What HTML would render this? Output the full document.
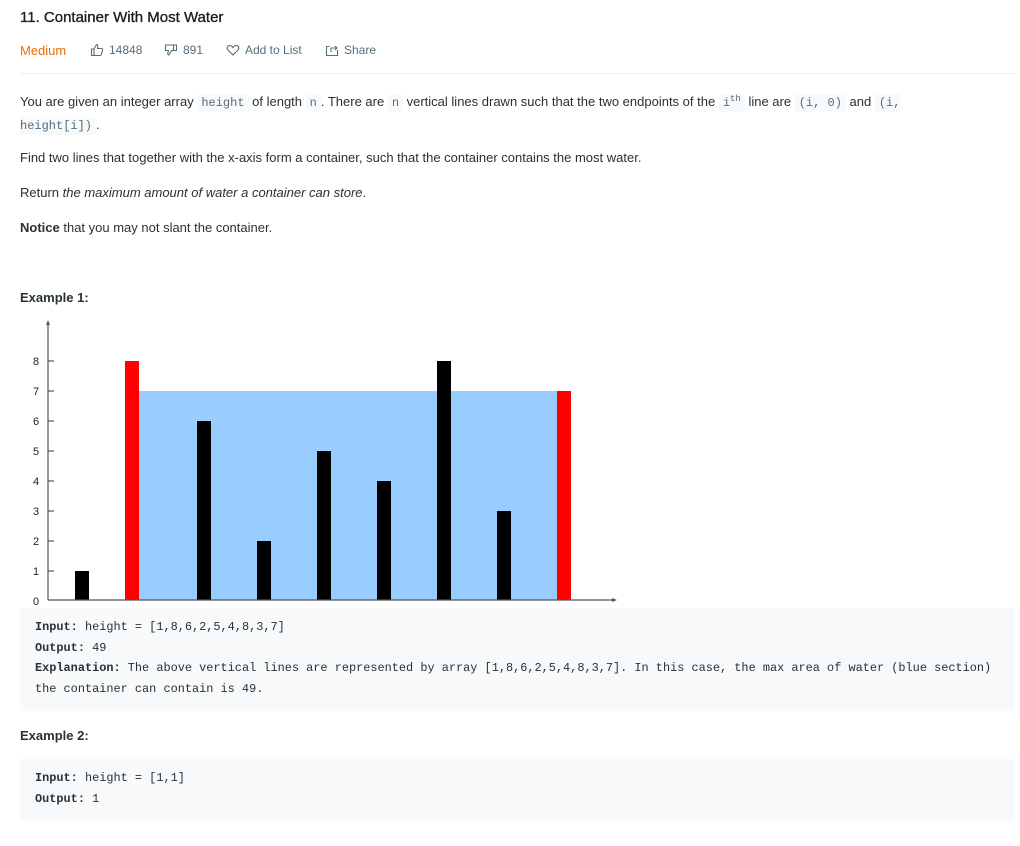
<!DOCTYPE html>
<html><head><meta charset="utf-8"><style>
body{margin:0;background:#fff;font-family:"Liberation Sans",sans-serif;color:#263238;width:1020px;height:846px;position:relative;overflow:hidden}
.a{position:absolute;white-space:nowrap}
code{font-family:"Liberation Mono",monospace;background:#f7f9fa;color:#546e7a;font-size:12px;padding:2px 4px;border-radius:3px}
p{margin:0;font-size:13px}
.meta{font-size:12px;color:#546e7a;display:flex;align-items:center;gap:5px}
pre{position:absolute;left:20px;width:995px;margin:0;background:#f7f9fa;border-radius:3px;font-family:"Liberation Mono",monospace;font-size:11.9px;line-height:20.7px;color:#263238;padding:0 15px;box-sizing:border-box;white-space:pre}
</style></head><body>
<div class="a" style="left:20px;top:9px;font-size:15px;color:#212121;-webkit-text-stroke:0.35px #212121">11. Container With Most Water</div>
<div class="a" style="left:20px;top:43px;font-size:13px;color:#ef6c00">Medium</div>
<div class="a meta" style="left:90px;top:43px"><svg width="14" height="14" viewBox="0 0 14 14" fill="none" stroke="#546e7a" stroke-width="1.1"><path d="M1.5 6h2.5v6.5h-2.5zM4 6l2.5-4.5c1 0 1.5.7 1.3 1.8L7.4 5.5h4.1c.8 0 1.3.7 1.1 1.4l-1.2 4.6c-.2.6-.7 1-1.3 1H4"/></svg>14848</div>
<div class="a meta" style="left:164px;top:43px"><svg width="14" height="14" viewBox="0 0 14 14" fill="none" stroke="#546e7a" stroke-width="1.1"><path d="M1.5 2h11v5.5h-5l-2.5 4.5c-1 0-1.4-.7-1.2-1.6l.6-2.9H1.5zM9.5 2v5.5"/></svg>891</div>
<div class="a meta" style="left:226px;top:43px"><svg width="14" height="14" viewBox="0 0 14 14" fill="none" stroke="#546e7a" stroke-width="1.1"><path d="M7 12L2 7C0.5 5.5 1.2 2.5 3.8 2.5 5.2 2.5 6.3 3.5 7 4.5 7.7 3.5 8.8 2.5 10.2 2.5 12.8 2.5 13.5 5.5 12 7z"/></svg> Add to List</div>
<div class="a meta" style="left:325px;top:43px"><svg width="14" height="14" viewBox="0 0 14 14" fill="none" stroke="#546e7a" stroke-width="1.1"><path d="M1.5 3.5v9h11V7M1.5 3.5h3M6 9V5h6M10 3l2 2-2 2"/></svg> Share</div>
<div class="a" style="left:20px;top:73px;width:995px;height:1px;background:#eceff1"></div>
<div class="a" style="left:20px;top:88px;font-size:13px;line-height:22px;white-space:normal;width:990px">You are given an integer array <code>height</code> of length <code>n</code>. There are <code>n</code> vertical lines drawn such that the two endpoints of the <code>i<sup style="font-size:9px">th</sup></code> line are <code>(i, 0)</code> and <code>(i,<br>height[i])</code>.</div>
<p class="a" style="left:20px;top:150px">Find two lines that together with the x-axis form a container, such that the container contains the most water.</p>
<p class="a" style="left:20px;top:185px">Return <i>the maximum amount of water a container can store</i>.</p>
<p class="a" style="left:20px;top:220px"><b>Notice</b> that you may not slant the container.</p>
<p class="a" style="left:20px;top:290px"><b>Example 1:</b></p>
<svg class="a" style="left:0;top:315px" width="640" height="295" viewBox="0 315 640 295">
<rect x="139" y="391" width="418" height="209" fill="#99ccff"/>
<g fill="#000"><rect x="75" y="571" width="14" height="29"/><rect x="197" y="421" width="14" height="179"/><rect x="257" y="541" width="14" height="59"/><rect x="317" y="451" width="14" height="149"/><rect x="377" y="481" width="14" height="119"/><rect x="437" y="361" width="14" height="239"/><rect x="497" y="511" width="14" height="89"/></g>
<g fill="#ff0000"><rect x="125" y="361" width="14" height="239"/><rect x="557" y="391" width="14" height="209"/></g>
<g stroke="#555" stroke-width="1.2"><line x1="48" y1="322" x2="48" y2="600"/><line x1="48" y1="600" x2="614" y2="600"/>
<line x1="48" y1="361" x2="54" y2="361"/><line x1="48" y1="391" x2="54" y2="391"/><line x1="48" y1="421" x2="54" y2="421"/><line x1="48" y1="451" x2="54" y2="451"/><line x1="48" y1="481" x2="54" y2="481"/><line x1="48" y1="511" x2="54" y2="511"/><line x1="48" y1="541" x2="54" y2="541"/><line x1="48" y1="571" x2="54" y2="571"/></g>
<path d="M48 320l-2 5h4z M617 600l-5-2v4z" fill="#555"/>
<g font-family="Liberation Sans" font-size="11" fill="#222" text-anchor="middle"><text x="36" y="365">8</text><text x="36" y="395">7</text><text x="36" y="425">6</text><text x="36" y="455">5</text><text x="36" y="485">4</text><text x="36" y="515">3</text><text x="36" y="545">2</text><text x="36" y="575">1</text><text x="36" y="605">0</text></g>
</svg>
<pre style="top:608px;height:103px;padding-top:9px"><b>Input:</b> height = [1,8,6,2,5,4,8,3,7]
<b>Output:</b> 49
<b>Explanation:</b> The above vertical lines are represented by array [1,8,6,2,5,4,8,3,7]. In this case, the max area of water (blue section)
the container can contain is 49.</pre>
<p class="a" style="left:20px;top:728px"><b>Example 2:</b></p>
<pre style="top:759px;height:62px;padding-top:9px"><b>Input:</b> height = [1,1]
<b>Output:</b> 1</pre>
</body></html>
